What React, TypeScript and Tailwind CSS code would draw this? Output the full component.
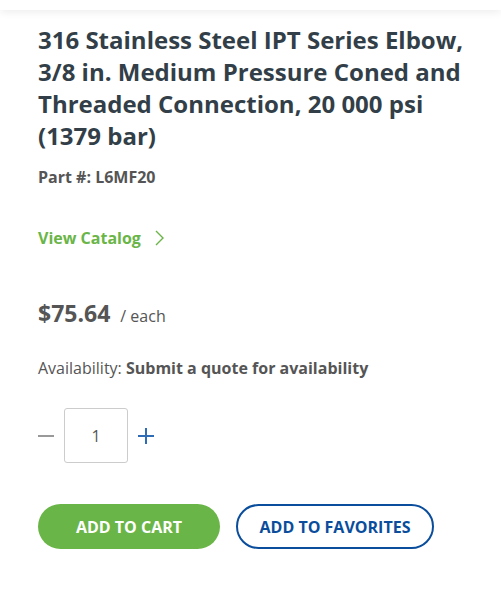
import { useState } from 'react';

export default function App() {
  const [qty, setQty] = useState(1);

  return (
    <div
      className="w-[501px] min-h-[593px] bg-white"
      style={{ fontFamily: '"Open Sans", "Liberation Sans", sans-serif' }}
    >
      <div className="h-[10px] bg-white shadow-[0_2px_8px_rgba(0,0,0,0.08)]" />
      <div className="pl-[38px] pr-[20px] pt-[14px]">
        <h1 className="text-[24px] leading-[32px] font-bold text-[#333f48]">
          316 Stainless Steel IPT Series Elbow, 3/8 in. Medium Pressure Coned and Threaded Connection, 20 000 psi (1379 bar)
        </h1>
        <p className="mt-[14px] text-[16px] leading-[22px] font-bold text-[#555555]">Part #: L6MF20</p>

        <a href="#" className="mt-[38px] flex items-center gap-[14px] text-[16px] leading-[24px] font-bold text-[#6ab547]">
          View Catalog
          <svg width="9" height="16" viewBox="0 0 9 16" fill="none">
            <path d="M1 1l7 7-7 7" stroke="#6ab547" strokeWidth="1.4" />
          </svg>
        </a>

        <div className="mt-[48px] flex items-baseline gap-[10px] text-[#555555]">
          <span className="text-[23px] leading-[30px] font-bold">$75.64</span>
          <span className="text-[16px]">/ each</span>
        </div>

        <p className="mt-[29px] text-[16px] leading-[22px] text-[#555555]">
          Availability: <span className="font-bold">Submit a quote for availability</span>
        </p>

        <div className="mt-[29px] flex items-center gap-[10px]">
          <button
            onClick={() => setQty(Math.max(1, qty - 1))}
            className="w-[16px] h-[16px] flex items-center justify-center"
          >
            <svg width="16" height="16" viewBox="0 0 16 16">
              <path d="M0 8h16" stroke="#999999" strokeWidth="2" />
            </svg>
          </button>
          <div className="w-[64px] h-[55px] border border-[#cccccc] rounded-[3px] flex items-center justify-center text-[16px] text-[#555555]">
            {qty}
          </div>
          <button
            onClick={() => setQty(qty + 1)}
            className="w-[16px] h-[16px] flex items-center justify-center"
          >
            <svg width="16" height="16" viewBox="0 0 16 16">
              <path d="M0 8h16M8 0v16" stroke="#2e6db5" strokeWidth="2" />
            </svg>
          </button>
        </div>

        <div className="mt-[41px] flex gap-[16px]">
          <button className="w-[182px] h-[45px] rounded-full bg-[#6ab547] text-white text-[16px] font-bold">
            ADD TO CART
          </button>
          <button className="w-[198px] h-[45px] rounded-full border-2 border-[#0a4d9c] text-[#0a4d9c] text-[16px] font-bold">
            ADD TO FAVORITES
          </button>
        </div>
      </div>
    </div>
  );
}
